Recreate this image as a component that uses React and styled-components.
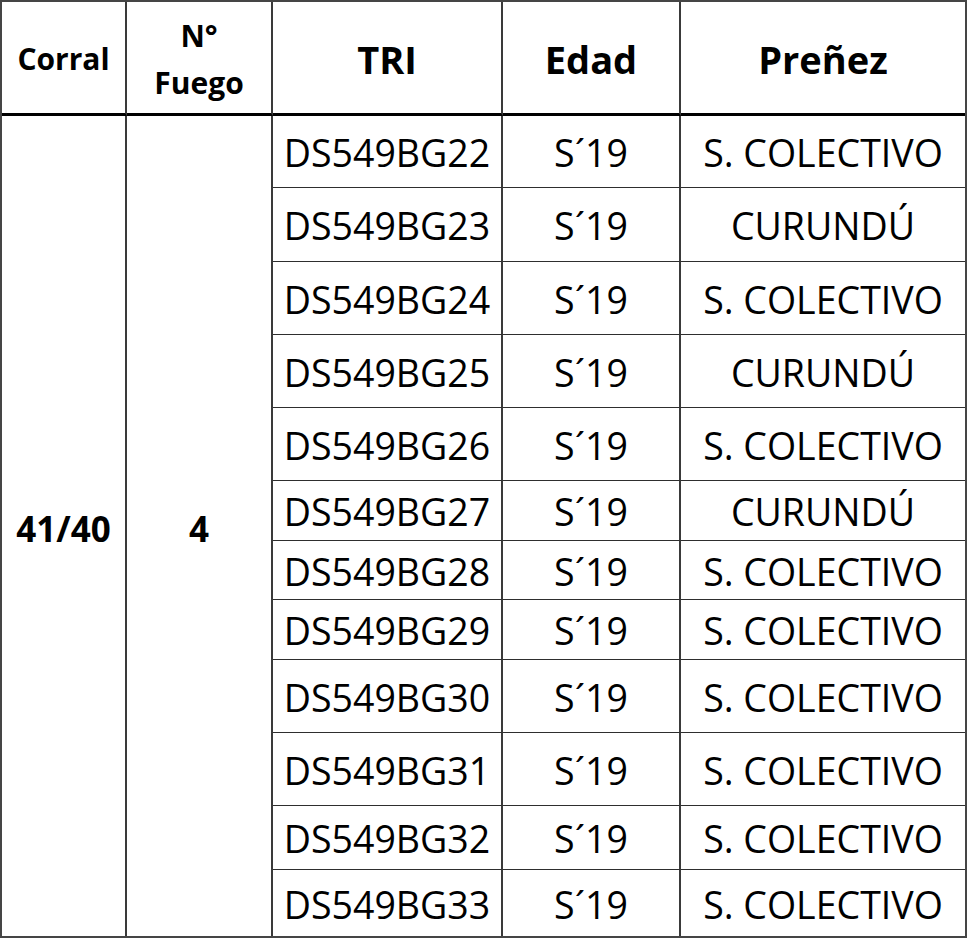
import React from "react";
import styled, { createGlobalStyle } from "styled-components";

const Global = createGlobalStyle`
  html, body { margin: 0; padding: 0; background: #ffffff; }
  body { font-family: "Open Sans", "Noto Sans", sans-serif; color: #000; }
`;

const ROW_HEIGHTS = [72, 74, 73, 73, 73, 60, 59, 60, 73, 73, 64, 66];

const Table = styled.div`
  box-sizing: border-box;
  width: 967px;
  height: 938px;
  border: 2px solid #454545;
  display: grid;
  grid-template-columns: 125px 146px 230px 178px 284px;
  grid-template-rows: 114px ${ROW_HEIGHTS.map((h) => `${h}px`).join(" ")};
  background: #fff;
`;

const Cell = styled.div`
  box-sizing: border-box;
  display: flex;
  align-items: center;
  justify-content: center;
  text-align: center;
  border-right: ${(p) => (p.$lastCol ? "none" : "1px solid #2e2e2e")};
  border-bottom: ${(p) => (p.$lastRow ? "none" : "1px solid #2e2e2e")};
  padding-top: 3px;
  font-size: 37.5px;
  line-height: 1;
  white-space: nowrap;
`;

const HeadCell = styled(Cell)`
  border-bottom: 3px solid #000;
  border-right: ${(p) => (p.$lastCol ? "none" : "2px solid #3a3a3a")};
  font-weight: 700;
  font-size: ${(p) => (p.$small ? "30px" : "38px")};
  line-height: ${(p) => (p.$small ? "47px" : "1")};
  padding-top: ${(p) => (p.$small ? "2px" : "3px")};
`;

const SpanCell = styled(Cell)`
  grid-row: 2 / span ${ROW_HEIGHTS.length};
  border-bottom: none;
  border-right: 2px solid #3a3a3a;
  font-weight: 700;
  font-size: 35px;
  padding-top: 4px;
`;

const DataCell = styled(Cell)`
  border-right: ${(p) => (p.$lastCol ? "none" : "2px solid #3a3a3a")};
`;

const ids = ["22", "23", "24", "25", "26", "27", "28", "29", "30", "31", "32", "33"];
const prenez = [
  "S. COLECTIVO",
  "CURUNDÚ",
  "S. COLECTIVO",
  "CURUNDÚ",
  "S. COLECTIVO",
  "CURUNDÚ",
  "S. COLECTIVO",
  "S. COLECTIVO",
  "S. COLECTIVO",
  "S. COLECTIVO",
  "S. COLECTIVO",
  "S. COLECTIVO",
];

export default function App() {
  return (
    <>
      <Global />
      <Table>
        <HeadCell $small>Corral</HeadCell>
        <HeadCell $small>
          N°
          <br />
          Fuego
        </HeadCell>
        <HeadCell>TRI</HeadCell>
        <HeadCell>Edad</HeadCell>
        <HeadCell $lastCol>Preñez</HeadCell>
        <SpanCell>41/40</SpanCell>
        <SpanCell>4</SpanCell>
        {ids.map((id, i) => {
          const last = i === ids.length - 1;
          return (
            <React.Fragment key={id}>
              <DataCell $lastRow={last}>DS549BG{id}</DataCell>
              <DataCell $lastRow={last}>S´19</DataCell>
              <DataCell $lastRow={last} $lastCol>
                {prenez[i]}
              </DataCell>
            </React.Fragment>
          );
        })}
      </Table>
    </>
  );
}
